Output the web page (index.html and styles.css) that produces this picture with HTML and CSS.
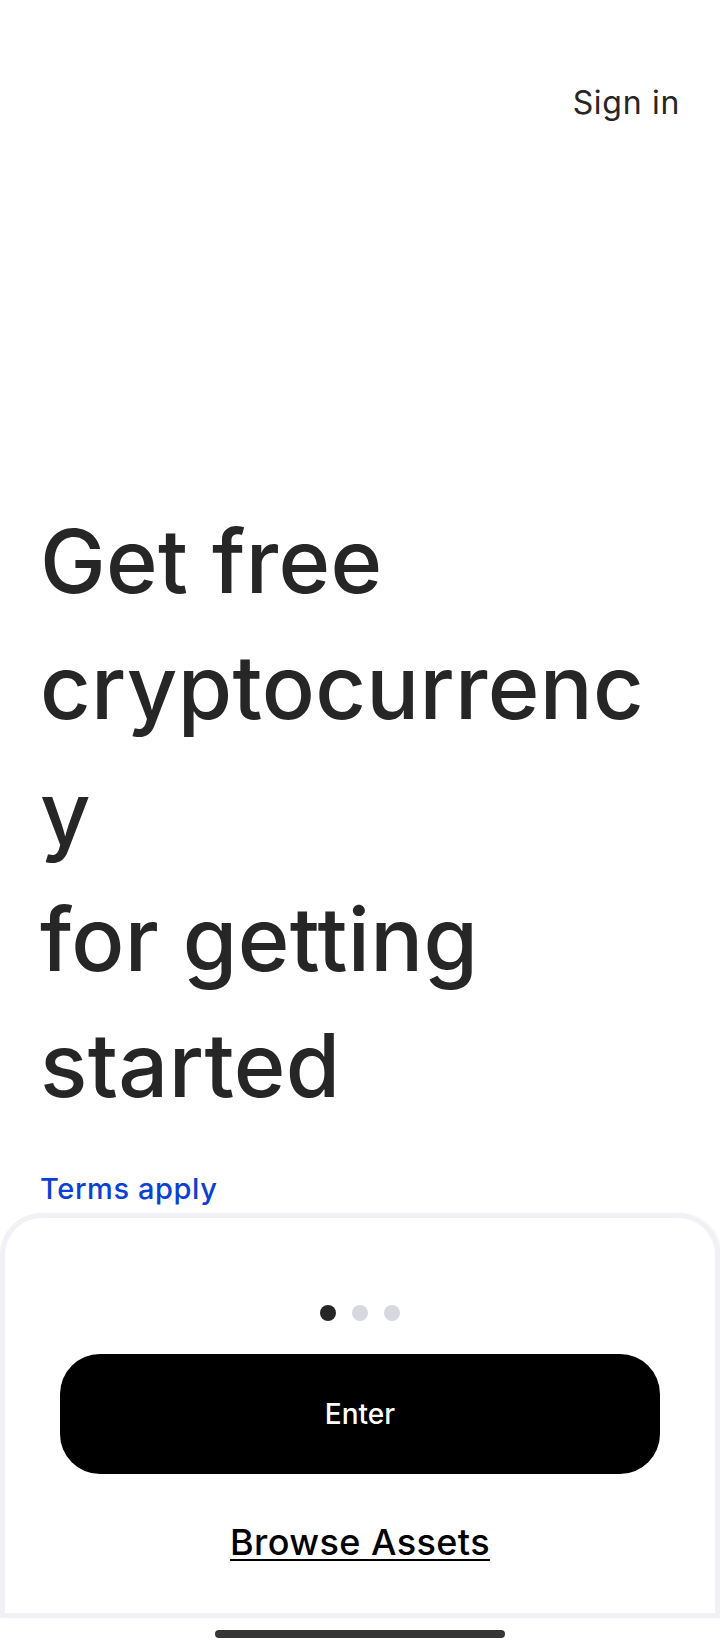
FILE: index.html
```html
<!DOCTYPE html>
<html lang="en">
<head>
<meta charset="utf-8">
<title>Get free cryptocurrency</title>
<link rel="stylesheet" href="styles.css">
</head>
<body>
<div class="screen">
  <header class="topbar">
    <a class="signin" href="#">Sign in</a>
  </header>
  <main class="hero">
    <h1 class="headline">Get free cryptocurrency<br>for getting started</h1>
    <a class="terms" href="#">Terms apply</a>
  </main>
  <section class="sheet">
    <div class="dots">
      <span class="dot dot-active"></span>
      <span class="dot"></span>
      <span class="dot"></span>
    </div>
    <button class="enter-btn" type="button">Enter</button>
    <a class="browse" href="#">Browse Assets</a>
  </section>
  <div class="home-area">
    <span class="home-indicator"></span>
  </div>
</div>
</body>
</html>
```
FILE: styles.css
```css
* {
  box-sizing: border-box;
}

html, body {
  margin: 0;
  padding: 0;
  background: #ffffff;
}

body {
  font-family: "Inter", "Noto Sans", sans-serif;
  color: #262626;
}

.screen {
  width: 720px;
  height: 1650px;
  display: flex;
  flex-direction: column;
  overflow: hidden;
}

.topbar {
  display: flex;
  justify-content: flex-end;
  padding: 83px 40px 0 40px;
}

.signin {
  font-size: 32px;
  line-height: 40px;
  color: #262626;
  text-decoration: none;
  letter-spacing: 0.7px;
}

.hero {
  padding: 375px 40px 0 40px;
}

.headline {
  margin: 0;
  font-size: 88px;
  line-height: 126px;
  font-weight: 500;
  color: #262626;
  overflow-wrap: anywhere;
  letter-spacing: 0.3px;
}

.terms {
  display: block;
  margin-top: 43px;
  font-size: 29px;
  line-height: 36px;
  font-weight: 500;
  color: #0b41d0;
  text-decoration: none;
  letter-spacing: 0.6px;
}

.sheet {
  margin-top: 6px;
  border: 5px solid #f0f0f5;
  border-radius: 42px 42px 0 0;
  background: #ffffff;
  box-shadow: 2px 0 3px rgba(0, 0, 0, 0.04);
  display: flex;
  flex-direction: column;
  align-items: center;
  padding: 87px 0 51px 0;
}

.dots {
  display: flex;
  gap: 16px;
}

.dot {
  width: 16px;
  height: 16px;
  border-radius: 50%;
  background: #d7d7df;
}

.dot-active {
  background: #262626;
}

.enter-btn {
  margin-top: 33px;
  width: 600px;
  height: 120px;
  border: none;
  border-radius: 40px;
  background: #000000;
  color: #ffffff;
  font-family: "Inter", "Noto Sans", sans-serif;
  font-size: 28px;
  font-weight: 500;
  display: flex;
  align-items: center;
  justify-content: center;
}

.browse {
  margin-top: 48px;
  font-size: 36px;
  line-height: 40px;
  font-weight: 500;
  color: #000000;
  letter-spacing: 0.4px;
  text-decoration: underline;
  text-decoration-thickness: 2px;
  text-underline-offset: 4px;
}

.home-area {
  display: flex;
  justify-content: center;
  padding-top: 12px;
}

.home-indicator {
  width: 290px;
  height: 8px;
  border-radius: 4px;
  background: #353535;
}
```
